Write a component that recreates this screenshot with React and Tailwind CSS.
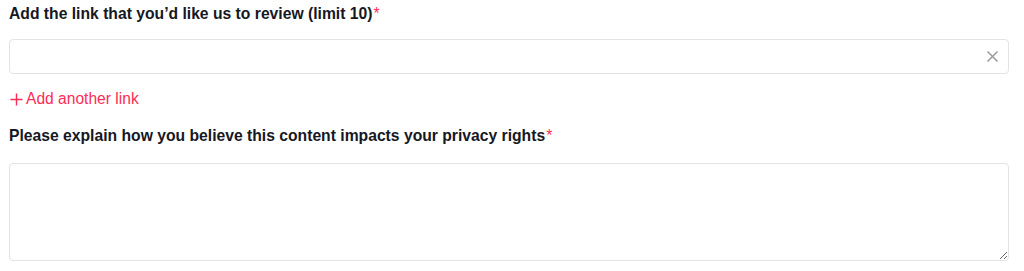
import { useState } from "react";

export default function App() {
  const [link, setLink] = useState("");
  const [reason, setReason] = useState("");

  return (
    <div
      className="w-[1024px] h-[271px] bg-white px-[9px] pt-[4px] text-[#161823]"
      style={{ fontFamily: '"Liberation Sans", Arial, sans-serif' }}
    >
      <label className="block text-[15.7px] font-bold leading-[20px]">
        Add the link that you’d like us to review (limit 10)
        <span className="text-[#fe2c55] font-normal ml-[1px]">*</span>
      </label>
      <div className="mt-[15px] relative w-[1000px]">
        <input
          type="text"
          value={link}
          onChange={(e) => setLink(e.target.value)}
          className="w-full h-[35px] border border-[#e3e3e4] rounded-[4px] px-3 pr-9 text-[15px] outline-none"
        />
        <button className="absolute right-[10px] top-[11px] text-[#9a9ba0]">
          <svg width="13" height="13" viewBox="0 0 13 13">
            <path
              d="M1.5 1.5L11.5 11.5M11.5 1.5L1.5 11.5"
              stroke="currentColor"
              strokeWidth="1.5"
            />
          </svg>
        </button>
      </div>
      <button className="mt-[15px] flex items-center text-[#fe2c55] text-[15.6px] leading-[20px]">
        <svg width="13" height="13" viewBox="0 0 13 13" className="ml-[1px] mr-[3px]">
          <path d="M6.5 0.5V12.5M0.5 6.5H12.5" stroke="currentColor" strokeWidth="1.4" />
        </svg>
        Add another link
      </button>
      <label className="block mt-[17px] text-[15.7px] font-bold leading-[20px]">
        Please explain how you believe this content impacts your privacy rights
        <span className="text-[#fe2c55] font-normal ml-[1px]">*</span>
      </label>
      <textarea
        value={reason}
        onChange={(e) => setReason(e.target.value)}
        className="block mt-[17px] w-[1000px] h-[98px] border border-[#e3e3e4] rounded-[4px] px-3 py-2 text-[15px] outline-none"
      />
    </div>
  );
}
